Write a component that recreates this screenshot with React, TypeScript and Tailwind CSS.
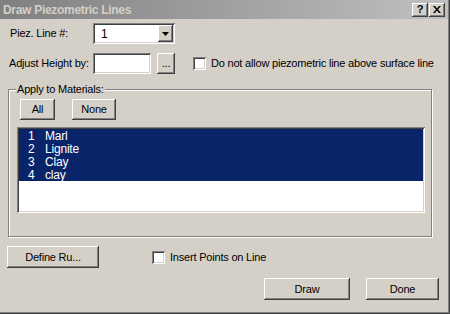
import React from "react";

const raised =
  "bg-[#d4d0c8] shadow-[inset_-1px_-1px_#404040,inset_1px_1px_#ffffff,inset_-2px_-2px_#808080,inset_2px_2px_#d4d0c8]";
const sunken =
  "bg-white shadow-[inset_1px_1px_#808080,inset_-1px_-1px_#ffffff,inset_2px_2px_#404040,inset_-2px_-2px_#d4d0c8]";

function Btn({ w, h, label, cls = "" }: { w: string; h: string; label: string; cls?: string }) {
  return (
    <div className={`${raised} ${w} ${h} flex items-center justify-center shrink-0 ${cls}`}>
      <span>{label}</span>
    </div>
  );
}

function Check() {
  return <div className={`${sunken} w-[13px] h-[13px] shrink-0`} />;
}

export default function App() {
  const items = [
    ["1", "Marl"],
    ["2", "Lignite"],
    ["3", "Clay"],
    ["4", "clay"],
  ];
  return (
    <div
      className="w-[450px] h-[314px] bg-[#d4d0c8] flex flex-col text-[11px] tracking-[-0.2px] text-black leading-none shadow-[inset_-1px_-1px_#404040,inset_-2px_-2px_#808080] overflow-hidden"
      style={{ fontFamily: '"Liberation Sans", Arial, sans-serif' }}
    >
      {/* Title bar */}
      <div className="h-[19px] mr-[2px] flex items-center bg-gradient-to-r from-[#808080] to-[#c0c0c0] pl-[3px] pr-[3px]">
        <span className="font-bold text-[12px] text-[#d4d0c8] flex-1 tracking-[-0.3px]">Draw Piezometric Lines</span>
        <div className={`${raised} w-[16px] h-[14px] flex items-center justify-center font-bold text-[11px]`}>?</div>
        <div className={`${raised} w-[16px] h-[14px] ml-[1px] flex items-center justify-center`}>
          <svg width="8" height="7" viewBox="0 0 8 7">
            <path d="M0 0h2l2 2.5 2-2.5h2L5 3.5 8 7H6L4 4.5 2 7H0l3-3.5z" fill="#000" />
          </svg>
        </div>
      </div>

      {/* Row 1 */}
      <div className="flex items-center mt-[4px] h-[21px]">
        <span className="pl-[10px] w-[93px]">Piez. Line #:</span>
        <div className={`${sunken} w-[82px] h-[21px] flex items-center relative`}>
          <span className="pl-[8px] text-[12px]">1</span>
          <div className={`${raised} absolute right-[2px] top-[2px] w-[15px] h-[17px] flex items-center justify-center`}>
            <svg width="7" height="4" viewBox="0 0 7 4">
              <path d="M0 0h7L3.5 4z" fill="#000" />
            </svg>
          </div>
        </div>
      </div>

      {/* Row 2 */}
      <div className="flex items-center mt-[9px] h-[21px]">
        <span className="pl-[9px] w-[93px]">Adjust Height by:</span>
        <div className={`${sunken} w-[58px] h-[21px]`} />
        <Btn w="w-[18px]" h="h-[21px]" label="..." cls="ml-[6px]" />
        <div className="ml-[18px]">
          <Check />
        </div>
        <span className="ml-[5px]">Do not allow piezometric line above surface line</span>
      </div>

      {/* Group box */}
      <div className="relative mt-[15px] ml-[8px] w-[424px] h-[148px] border border-[#808080] shadow-[1px_1px_#ffffff,inset_1px_1px_#ffffff] flex flex-col">
        <span className="absolute left-[7px] top-[-6px] bg-[#d4d0c8] px-[1px]">Apply to Materials:</span>
        <div className="flex mt-[9px] ml-[11px]">
          <Btn w="w-[35px]" h="h-[21px]" label="All" />
          <Btn w="w-[44px]" h="h-[21px]" label="None" cls="ml-[17px]" />
        </div>
        <div className={`${sunken} mt-[7px] ml-[8px] w-[408px] h-[86px] pt-[2px] px-[2px]`}>
          {items.map(([n, name]) => (
            <div key={n} className="h-[13px] bg-[#0a246a] text-white flex items-center text-[12px]">
              <span className="pl-[9px] w-[26px]">{n}</span>
              <span>{name}</span>
            </div>
          ))}
        </div>
      </div>

      {/* Row define */}
      <div className="flex items-center mt-[9px] h-[22px]">
        <Btn w="w-[92px]" h="h-[22px]" label="Define Ru..." cls="ml-[7px]" />
        <div className="ml-[53px]">
          <Check />
        </div>
        <span className="ml-[5px]">Insert Points on Line</span>
      </div>

      {/* Bottom buttons */}
      <div className="flex items-center mt-[10px] h-[22px]">
        <Btn w="w-[86px]" h="h-[22px]" label="Draw" cls="ml-[264px]" />
        <Btn w="w-[73px]" h="h-[22px]" label="Done" cls="ml-[16px]" />
      </div>
    </div>
  );
}
